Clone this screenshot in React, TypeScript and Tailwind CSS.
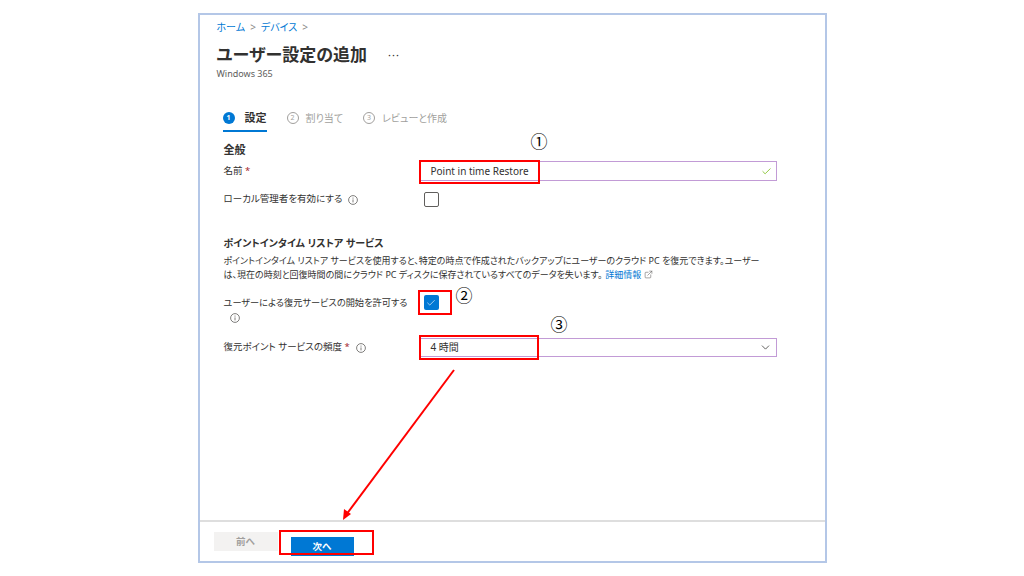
import { Check, ChevronDown, ExternalLink } from "lucide-react";

const jp = "font-['Noto_Sans','Noto_Sans_CJK_JP',sans-serif] [font-feature-settings:'palt']";

function InfoIcon({ className = "" }: { className?: string }) {
  return (
    <svg className={className} width="10" height="10" viewBox="0 0 10 10" fill="none">
      <circle cx="5" cy="5" r="4.4" stroke="#605e5c" strokeWidth="0.8" />
      <circle cx="5" cy="3" r="0.55" fill="#605e5c" />
      <path d="M5 4.4v3" stroke="#605e5c" strokeWidth="0.8" />
    </svg>
  );
}

function RedBox({ className }: { className: string }) {
  return <div className={`pointer-events-none absolute border-2 border-[#ff0000] ${className}`} />;
}

function Step({ n, label, active }: { n: number; label: string; active?: boolean }) {
  return (
    <div className="flex flex-col">
      <div className={`flex h-4 items-center ${active ? "gap-[10px]" : "gap-[7px]"}`}>
        {active ? (
          <span className="flex h-3 w-3 items-center justify-center rounded-full bg-[#0078d4] text-[7px] font-bold text-white">
            {n}
          </span>
        ) : (
          <span className="flex h-3 w-3 items-center justify-center rounded-full border border-[#a19f9d] text-[7px] text-[#a19f9d]">
            {n}
          </span>
        )}
        <span className={active ? "text-[11px] font-bold text-[#323130]" : "text-[10px] text-[#a19f9d]"}>{label}</span>
      </div>
      <div className={`mt-1 h-[2px] ${active ? "bg-[#0078d4]" : "bg-transparent"}`} />
    </div>
  );
}

export default function App() {
  return (
    <div className={`flex h-screen w-full items-center justify-center bg-white ${jp}`}>
      <div className="relative flex h-[550px] w-[629px] flex-col border-2 border-[#b4c7e7] bg-white">
        <div className="flex-1">
          <div className="pl-[17px] pt-[5px]">
            <div className="flex h-[14px] items-center gap-[5px] text-[10px] text-[#0078d4]">
              <span>ホーム</span>
              <span className="text-[#8a8886]">&gt;</span>
              <span>デバイス</span>
              <span className="text-[#8a8886]">&gt;</span>
            </div>
            <div className="mt-2 flex h-[26px] items-center">
              <h1 className="text-[17px] font-semibold text-[#323130]">ユーザー設定の追加</h1>
              <span className="ml-[21px] text-[11px] tracking-[1px] text-[#323130]">···</span>
            </div>
            <div className="h-3 text-[9px] leading-3 text-[#605e5c]">Windows 365</div>
          </div>

          <div className="mt-[30px] flex gap-[20px] pl-[23px]">
            <Step n={1} label="設定" active />
            <Step n={2} label="割り当て" />
            <Step n={3} label="レビューと作成" />
          </div>

          <div className="pl-[24px] pr-[48px] text-[#323130]">
            <div className="mt-[11px] h-[14px] text-[11px] font-bold leading-[14px]">全般</div>

            <div className="mt-1 flex items-center">
              <div className="w-[196px] text-[9.5px]">
                名前 <span className="text-[#a4262c]">*</span>
              </div>
              <div className="relative flex h-5 flex-1 items-center justify-between border border-[#c29bd6] pl-[10px] pr-[4px] text-[10px]">
                <span>Point in time Restore</span>
                <Check size={11} strokeWidth={1.6} className="text-[#6bb700]" />
                <RedBox className="-left-[2px] -top-[2px] h-6 w-[121px]" />
                <span className="absolute left-[110px] -top-[30px] text-[17px] leading-5 text-black">①</span>
              </div>
            </div>

            <div className="mt-[11px] flex items-center">
              <div className="flex w-[196px] items-center gap-[6px] text-[9.5px]">
                ローカル管理者を有効にする
                <InfoIcon />
              </div>
              <div className="ml-1 h-[15px] w-[15px] rounded-[2px] border border-[#605e5c]" />
            </div>

            <div className="mt-[29px] h-[14px] text-[10px] font-bold leading-[14px]">ポイントインタイム リストア サービス</div>
            <p className="mt-1 whitespace-nowrap text-[9px] leading-[14px] text-[#323130]">
              ポイントインタイム リストア サービスを使用すると、特定の時点で作成されたバックアップにユーザーのクラウド PC を復元できます。ユーザー
              <br />
              は、現在の時刻と回復時間の間にクラウド PC ディスクに保存されているすべてのデータを失います。
              <span className="ml-[3px] text-[#0078d4]">詳細情報</span>
              <ExternalLink size={9} strokeWidth={1.5} className="ml-[3px] inline align-[-1px] text-[#605e5c]" />
            </p>

            <div className="mt-[13px] flex items-start">
              <div className="w-[196px] whitespace-nowrap pt-[1px] text-[9.2px] leading-[14px]">
                ユーザーによる復元サービスの開始を許可する
                <InfoIcon className="ml-[6px] mt-[3px] block" />
              </div>
              <div className="relative ml-1 flex h-[15px] w-[15px] items-center justify-center rounded-[2px] bg-[#0078d4]">
                <Check size={10} strokeWidth={1.5} className="text-white" />
                <RedBox className="-left-[6px] -top-[5px] h-[25px] w-[34px]" />
                <span className="absolute left-[32px] -top-[9px] text-[17px] leading-5 text-black">②</span>
              </div>
            </div>

            <div className="mt-[15px] flex items-center">
              <div className="flex w-[196px] items-center gap-[6px] text-[9.5px]">
                <span>
                  復元ポイント サービスの頻度 <span className="text-[#a4262c]">*</span>
                </span>
                <InfoIcon />
              </div>
              <div className="relative flex h-[19px] flex-1 items-center justify-between border border-[#c29bd6] pl-[10px] pr-[4px] text-[10px]">
                <span>4 時間</span>
                <ChevronDown size={13} strokeWidth={1.4} className="text-[#323130]" />
                <RedBox className="-left-[2px] -top-[4px] h-[25px] w-[120px]" />
                <span className="absolute left-[130px] -top-[24px] text-[17px] leading-5 text-black">③</span>
              </div>
            </div>
          </div>
        </div>

        <div className="flex h-[41px] items-start gap-[13px] border-t-2 border-[#dedede] pl-[14px] pt-[10px]">
          <button className="h-[19px] w-16 bg-[#f3f2f1] text-[9.5px] font-semibold leading-[19px] text-[#a19f9d]">前へ</button>
          <div className="relative">
            <button className="h-[19px] w-[63px] bg-[#0078d4] text-[9.5px] font-bold leading-[19px] text-white">次へ</button>
            <RedBox className="-left-[12px] -top-[2px] h-[25px] w-[95px]" />
          </div>
        </div>

        <svg className="pointer-events-none absolute -left-[2px] -top-[2px]" width="629" height="550" viewBox="0 0 629 550">
          <line x1="256" y1="357" x2="148" y2="502" stroke="#ff0000" strokeWidth="2" />
          <polygon points="145,507 146,496 153,501" fill="#ff0000" />
        </svg>
      </div>
    </div>
  );
}
